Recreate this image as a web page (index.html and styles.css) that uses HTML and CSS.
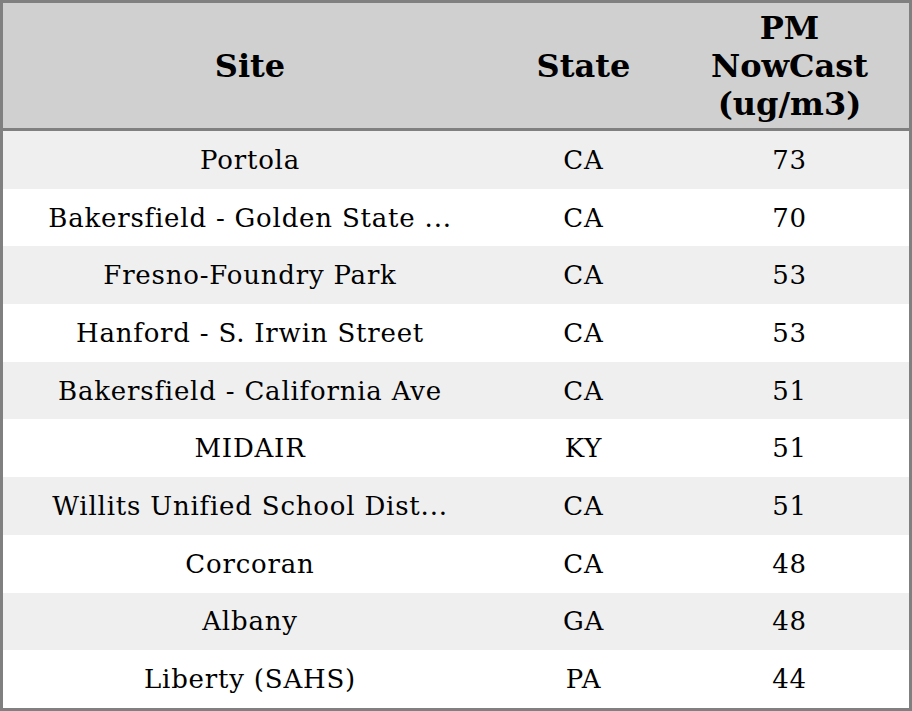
FILE: index.html
```html
<!DOCTYPE html>
<html>
<head>
<meta charset="utf-8">
<link rel="stylesheet" href="styles.css">
</head>
<body>
<table class="aq">
  <colgroup>
    <col class="c-site">
    <col class="c-state">
    <col class="c-pm">
  </colgroup>
  <thead>
    <tr><th>Site</th><th>State</th><th>PM<br>NowCast<br>(ug/m3)</th></tr>
  </thead>
  <tbody>
    <tr><td>Portola</td><td>CA</td><td>73</td></tr>
    <tr><td>Bakersfield - Golden State ...</td><td>CA</td><td>70</td></tr>
    <tr><td>Fresno-Foundry Park</td><td>CA</td><td>53</td></tr>
    <tr><td>Hanford - S. Irwin Street</td><td>CA</td><td>53</td></tr>
    <tr><td>Bakersfield - California Ave</td><td>CA</td><td>51</td></tr>
    <tr><td>MIDAIR</td><td>KY</td><td>51</td></tr>
    <tr><td>Willits Unified School Dist...</td><td>CA</td><td>51</td></tr>
    <tr><td>Corcoran</td><td>CA</td><td>48</td></tr>
    <tr><td>Albany</td><td>GA</td><td>48</td></tr>
    <tr><td>Liberty (SAHS)</td><td>PA</td><td>44</td></tr>
  </tbody>
</table>
</body>
</html>
```
FILE: styles.css
```css
html, body {
  margin: 0;
  padding: 0;
  background: #ffffff;
}
.aq {
  width: 912px;
  border-collapse: separate;
  border-spacing: 0;
  border: 3px solid #808080;
  table-layout: fixed;
  font-family: "DejaVu Serif", serif;
  color: #000000;
}
.c-site { width: 494px; }
.c-state { width: 173px; }
.c-pm { width: 239px; }
.aq th {
  background: #d0d0d0;
  font-size: 32px;
  font-weight: bold;
  line-height: 38px;
  height: 128px;
  padding: 0;
  text-align: center;
  vertical-align: middle;
  border-bottom: 3px solid #808080;
  box-sizing: border-box;
}
.aq td {
  font-size: 26px;
  letter-spacing: 0.8px;
  height: 57.7px;
  padding: 0;
  text-align: center;
  vertical-align: middle;
  white-space: nowrap;
  box-sizing: border-box;
}
.aq tbody tr:nth-child(odd) td { background: #efefef; }
.aq tbody tr:nth-child(even) td { background: #ffffff; }
```
